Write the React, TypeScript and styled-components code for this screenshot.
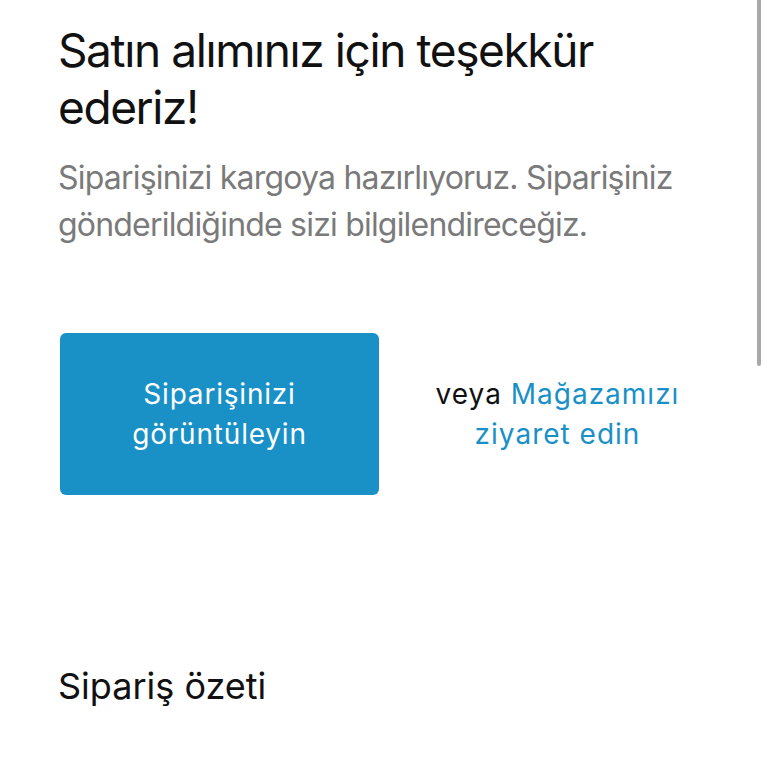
import React from 'react'
import styled, { createGlobalStyle } from 'styled-components'

const GlobalStyle = createGlobalStyle`
  html, body {
    margin: 0;
    padding: 0;
    background: #ffffff;
  }

  body {
    font-family: Inter, "Liberation Sans", Arial, sans-serif;
    -webkit-font-smoothing: antialiased;
    overflow: hidden;
  }
`

const Page = styled.div`
  position: relative;
  width: 768px;
  height: 768px;
  overflow: hidden;
  box-sizing: border-box;
  padding: 22px 48px 0 58px;
`

const Title = styled.h2`
  margin: 0;
  font-size: 46px;
  line-height: 57px;
  font-weight: 400;
  color: #111111;
  letter-spacing: -1.4px;
  white-space: nowrap;
`

const Lead = styled.p`
  margin: 18px 0 0;
  font-size: 32px;
  line-height: 47px;
  color: #7a7a7a;
  letter-spacing: -0.8px;
  white-space: nowrap;
`

const Actions = styled.div`
  display: flex;
  align-items: center;
  margin-top: 85px;
`

const PrimaryButton = styled.a`
  display: flex;
  align-items: center;
  justify-content: center;
  width: 319px;
  height: 162px;
  margin-left: 2px;
  flex-shrink: 0;
  border-radius: 6px;
  background: #1990c6;
  color: #ffffff;
  font-size: 28px;
  line-height: 40px;
  letter-spacing: 0.8px;
  text-align: center;
  text-decoration: none;
`

const AltAction = styled.div`
  flex: 1;
  text-align: center;
  font-size: 28px;
  line-height: 40px;
  letter-spacing: 1px;
  color: #111111;
  padding-left: 16px;
  white-space: nowrap;
`

const StoreLink = styled.a`
  color: #1990c6;
  text-decoration: none;
`

const SectionTitle = styled.h3`
  margin: 169px 0 0;
  font-size: 36px;
  line-height: 44px;
  font-weight: 400;
  color: #111111;
`

const ScrollThumb = styled.div`
  position: absolute;
  top: 0;
  right: 7px;
  width: 4px;
  height: 366px;
  border-radius: 0 0 2px 2px;
  background: #a8a8a8;
`

export default function App() {
  return (
    <>
      <GlobalStyle />
      <Page>
        <Title>
          Satın alımınız için teşekkür
          <br />
          ederiz!
        </Title>
        <Lead>
          Siparişinizi kargoya hazırlıyoruz. Siparişiniz
          <br />
          gönderildiğinde sizi bilgilendireceğiz.
        </Lead>
        <Actions>
          <PrimaryButton href="#">
            Siparişinizi
            <br />
            görüntüleyin
          </PrimaryButton>
          <AltAction>
            veya <StoreLink href="#">Mağazamızı</StoreLink>
            <br />
            <StoreLink href="#">ziyaret edin</StoreLink>
          </AltAction>
        </Actions>
        <SectionTitle>Sipariş özeti</SectionTitle>
        <ScrollThumb />
      </Page>
    </>
  )
}
